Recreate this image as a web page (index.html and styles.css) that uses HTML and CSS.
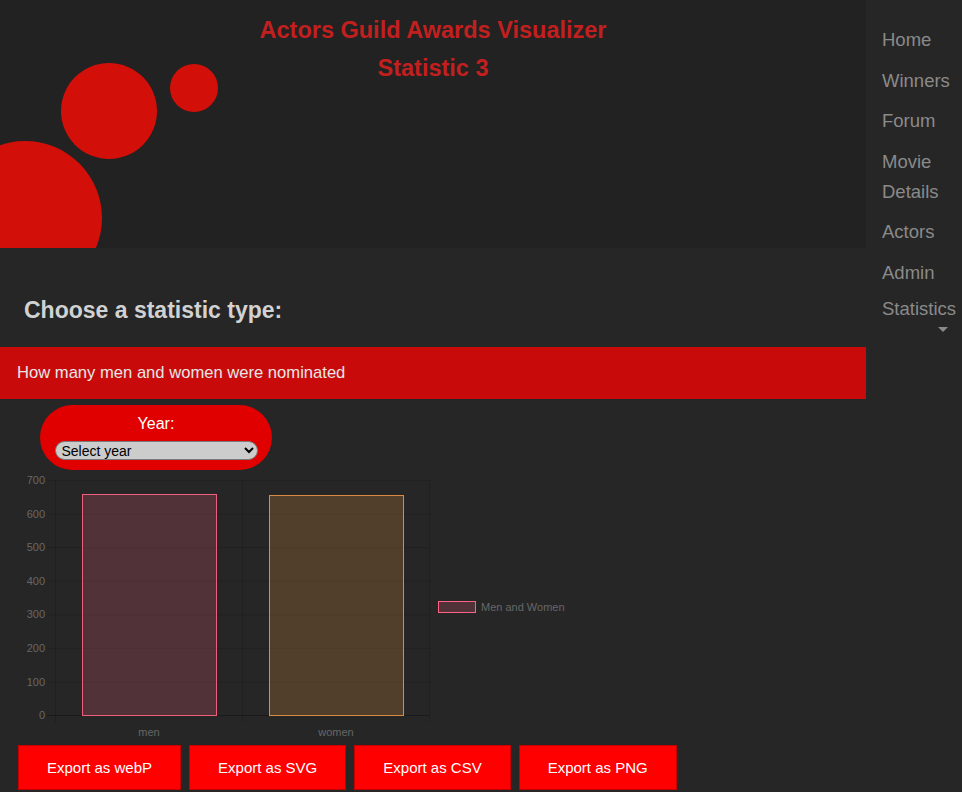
FILE: index.html
```html
<!DOCTYPE html>
<html lang="en">
<head>
<meta charset="utf-8">
<title>Actors Guild Awards Visualizer - Statistic 3</title>
<link rel="stylesheet" href="styles.css">
</head>
<body>
<div class="page">
  <main class="main">
    <header class="header">
      <svg class="bubbles" width="230" height="248" viewBox="0 0 230 248" aria-hidden="true">
        <circle cx="25" cy="218" r="77" fill="#d20f08"/>
        <circle cx="109" cy="111" r="48" fill="#d20f08"/>
        <circle cx="194" cy="88" r="24" fill="#d20f08"/>
      </svg>
      <h1 class="title"><span class="title-line">Actors Guild Awards Visualizer</span><span class="title-line">Statistic 3</span></h1>
    </header>

    <h2 class="choose">Choose a statistic type:</h2>
    <div class="stat-bar">How many men and women were nominated</div>

    <div class="year-pill">
      <label class="year-label" for="year">Year:</label>
      <select id="year" class="year-select">
        <option>Select year</option>
      </select>
    </div>

    <svg class="chart" width="580" height="270" viewBox="0 0 580 270">
      <g class="grid">
        <line x1="47" y1="8.5" x2="430" y2="8.5"/>
        <line x1="47" y1="42.07" x2="430" y2="42.07"/>
        <line x1="47" y1="75.64" x2="430" y2="75.64"/>
        <line x1="47" y1="109.21" x2="430" y2="109.21"/>
        <line x1="47" y1="142.79" x2="430" y2="142.79"/>
        <line x1="47" y1="176.36" x2="430" y2="176.36"/>
        <line x1="47" y1="209.93" x2="430" y2="209.93"/>
        <line x1="55.5" y1="8" x2="55.5" y2="251"/>
        <line x1="242.5" y1="8" x2="242.5" y2="251"/>
        <line x1="429.5" y1="8" x2="429.5" y2="251"/>
      </g>
      <line class="zero" x1="47" y1="243.5" x2="430" y2="243.5"/>
      <g class="ticks">
        <text x="45" y="12">700</text>
        <text x="45" y="45.6">600</text>
        <text x="45" y="79.2">500</text>
        <text x="45" y="112.8">400</text>
        <text x="45" y="146.4">300</text>
        <text x="45" y="179.9">200</text>
        <text x="45" y="213.5">100</text>
        <text x="45" y="247">0</text>
      </g>
      <rect class="bar-men" x="82.5" y="22.5" width="134" height="221"/>
      <rect class="bar-women" x="269.5" y="23.5" width="134" height="220"/>
      <g class="xlabels">
        <text x="149" y="264">men</text>
        <text x="336" y="264">women</text>
      </g>
      <rect class="legend-box" x="438.5" y="129.5" width="37" height="11"/>
      <text class="legend-text" x="481" y="138.5">Men and Women</text>
    </svg>

    <div class="exports">
      <button class="export-btn" type="button">Export as webP</button>
      <button class="export-btn" type="button">Export as SVG</button>
      <button class="export-btn" type="button">Export as CSV</button>
      <button class="export-btn" type="button">Export as PNG</button>
    </div>
  </main>

  <aside class="sidebar">
    <ul class="nav">
      <li class="nav-item"><a href="#">Home</a></li>
      <li class="nav-item"><a href="#">Winners</a></li>
      <li class="nav-item"><a href="#">Forum</a></li>
      <li class="nav-item"><a href="#">Movie Details</a></li>
      <li class="nav-item"><a href="#">Actors</a></li>
      <li class="nav-item"><a href="#">Admin</a></li>
      <li class="nav-item nav-dropdown"><a href="#">Statistics</a><span class="caret"></span></li>
    </ul>
  </aside>
</div>
</body>
</html>
```

FILE: styles.css
```css
html, body {
  margin: 0;
  padding: 0;
  background: #262626;
  font-family: "Liberation Sans", Arial, sans-serif;
}

.page {
  display: flex;
  min-height: 792px;
}

.main {
  width: 866px;
  flex: none;
}

.header {
  position: relative;
  height: 248px;
  background: #222222;
  overflow: hidden;
}

.bubbles {
  position: absolute;
  left: 0;
  top: 0;
}

.title {
  position: relative;
  margin: 0;
  padding-top: 11px;
  font-size: 23.5px;
  font-weight: bold;
  line-height: 38px;
  color: #c21f1f;
  text-align: center;
}

.title-line {
  display: block;
}

.choose {
  margin: 48px 0 0 24px;
  font-size: 23px;
  line-height: 28px;
  font-weight: bold;
  color: #d2d2d2;
}

.stat-bar {
  margin-top: 23px;
  height: 52px;
  line-height: 51px;
  padding-left: 17px;
  background: #c80a0a;
  color: #e6e6e6;
  font-size: 16.6px;
}

.year-pill {
  margin: 6px 0 0 40px;
  width: 232px;
  height: 65px;
  box-sizing: border-box;
  padding-top: 10px;
  background: #e00000;
  border-radius: 33px;
  display: flex;
  flex-direction: column;
  align-items: center;
}

.year-label {
  font-size: 16px;
  line-height: 18px;
  color: #ffffff;
}

.year-select {
  margin-top: 8px;
  width: 203px;
  height: 19px;
  box-sizing: border-box;
  padding: 0 2px;
  font-family: "Liberation Sans", Arial, sans-serif;
  font-size: 14px;
  color: #000;
  background-color: #cccccc;
  border: 1px solid #7a7a7a;
  border-radius: 10px;
}

.chart {
  display: block;
  margin-top: 2px;
  font-family: "Liberation Sans", Arial, sans-serif;
}

.grid line {
  stroke: rgba(0, 0, 0, 0.13);
  stroke-width: 1;
}

.zero {
  stroke: rgba(0, 0, 0, 0.3);
  stroke-width: 1;
}

.ticks text {
  font-size: 11px;
  fill: #666666;
  text-anchor: end;
}

.xlabels text {
  font-size: 11px;
  fill: #666666;
  text-anchor: middle;
}

.bar-men {
  fill: rgba(255, 99, 132, 0.2);
  stroke: #ef5f7c;
  stroke-width: 1;
}

.bar-women {
  fill: rgba(255, 159, 64, 0.2);
  stroke: #d98a45;
  stroke-width: 1;
}

.legend-box {
  fill: rgba(255, 99, 132, 0.2);
  stroke: #ff6384;
  stroke-width: 1;
}

.legend-text {
  font-size: 11px;
  fill: #666666;
}

.exports {
  display: flex;
  gap: 8px;
  margin: 3px 0 0 18px;
}

.export-btn {
  padding: 13px 28px;
  font-family: "Liberation Sans", Arial, sans-serif;
  font-size: 15px;
  line-height: 17px;
  color: #ffffff;
  background: #ff0000;
  border: 1px solid #c40000;
  cursor: pointer;
}

.sidebar {
  flex: 1;
  background: #262626;
}

.nav {
  list-style: none;
  margin: 0;
  padding: 25px 0 0 16px;
}

.nav-item {
  margin-bottom: 10.5px;
  font-size: 18.5px;
  line-height: 30px;
}

.nav-item a {
  color: #8a8a8a;
  text-decoration: none;
}

.nav-dropdown {
  margin-top: -4px;
}

.nav-dropdown a {
  display: block;
}

.caret {
  display: block;
  width: 0;
  height: 0;
  margin: 3px 0 0 56px;
  border-left: 5.5px solid transparent;
  border-right: 5.5px solid transparent;
  border-top: 5.5px solid #8a8a8a;
}
```
